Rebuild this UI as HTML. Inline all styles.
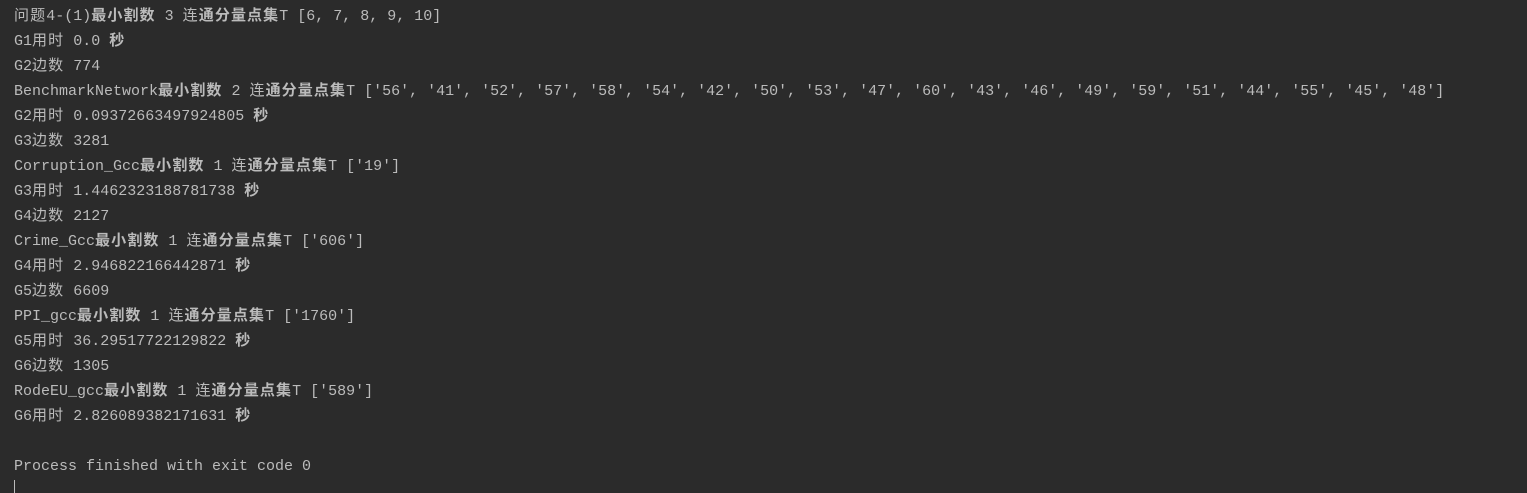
<!DOCTYPE html><html><head><meta charset="utf-8"><style>
body{margin:0;background:#2b2b2b;width:1527px;height:493px;overflow:hidden}
pre{margin:0;position:absolute;left:14px;top:4px;font:15px/25px "Liberation Mono","Noto Sans CJK SC",monospace;color:#bbbbbb}
b{font-weight:bold;letter-spacing:1.1px}
i{font-style:normal;letter-spacing:1.1px}
.c{position:absolute;left:14px;top:480px;width:1px;height:13px;background:#bbb}
</style></head><body><pre><i>问题</i>4-(1)<b>最小割数</b> 3 <i>连</i><b>通分量点集</b>T [6, 7, 8, 9, 10]
G1<i>用时</i> 0.0 <b>秒</b>
G2<i>边数</i> 774
BenchmarkNetwork<b>最小割数</b> 2 <i>连</i><b>通分量点集</b>T ['56', '41', '52', '57', '58', '54', '42', '50', '53', '47', '60', '43', '46', '49', '59', '51', '44', '55', '45', '48']
G2<i>用时</i> 0.09372663497924805 <b>秒</b>
G3<i>边数</i> 3281
Corruption_Gcc<b>最小割数</b> 1 <i>连</i><b>通分量点集</b>T ['19']
G3<i>用时</i> 1.4462323188781738 <b>秒</b>
G4<i>边数</i> 2127
Crime_Gcc<b>最小割数</b> 1 <i>连</i><b>通分量点集</b>T ['606']
G4<i>用时</i> 2.946822166442871 <b>秒</b>
G5<i>边数</i> 6609
PPI_gcc<b>最小割数</b> 1 <i>连</i><b>通分量点集</b>T ['1760']
G5<i>用时</i> 36.29517722129822 <b>秒</b>
G6<i>边数</i> 1305
RodeEU_gcc<b>最小割数</b> 1 <i>连</i><b>通分量点集</b>T ['589']
G6<i>用时</i> 2.826089382171631 <b>秒</b>

Process finished with exit code 0</pre><div class="c"></div></body></html>
